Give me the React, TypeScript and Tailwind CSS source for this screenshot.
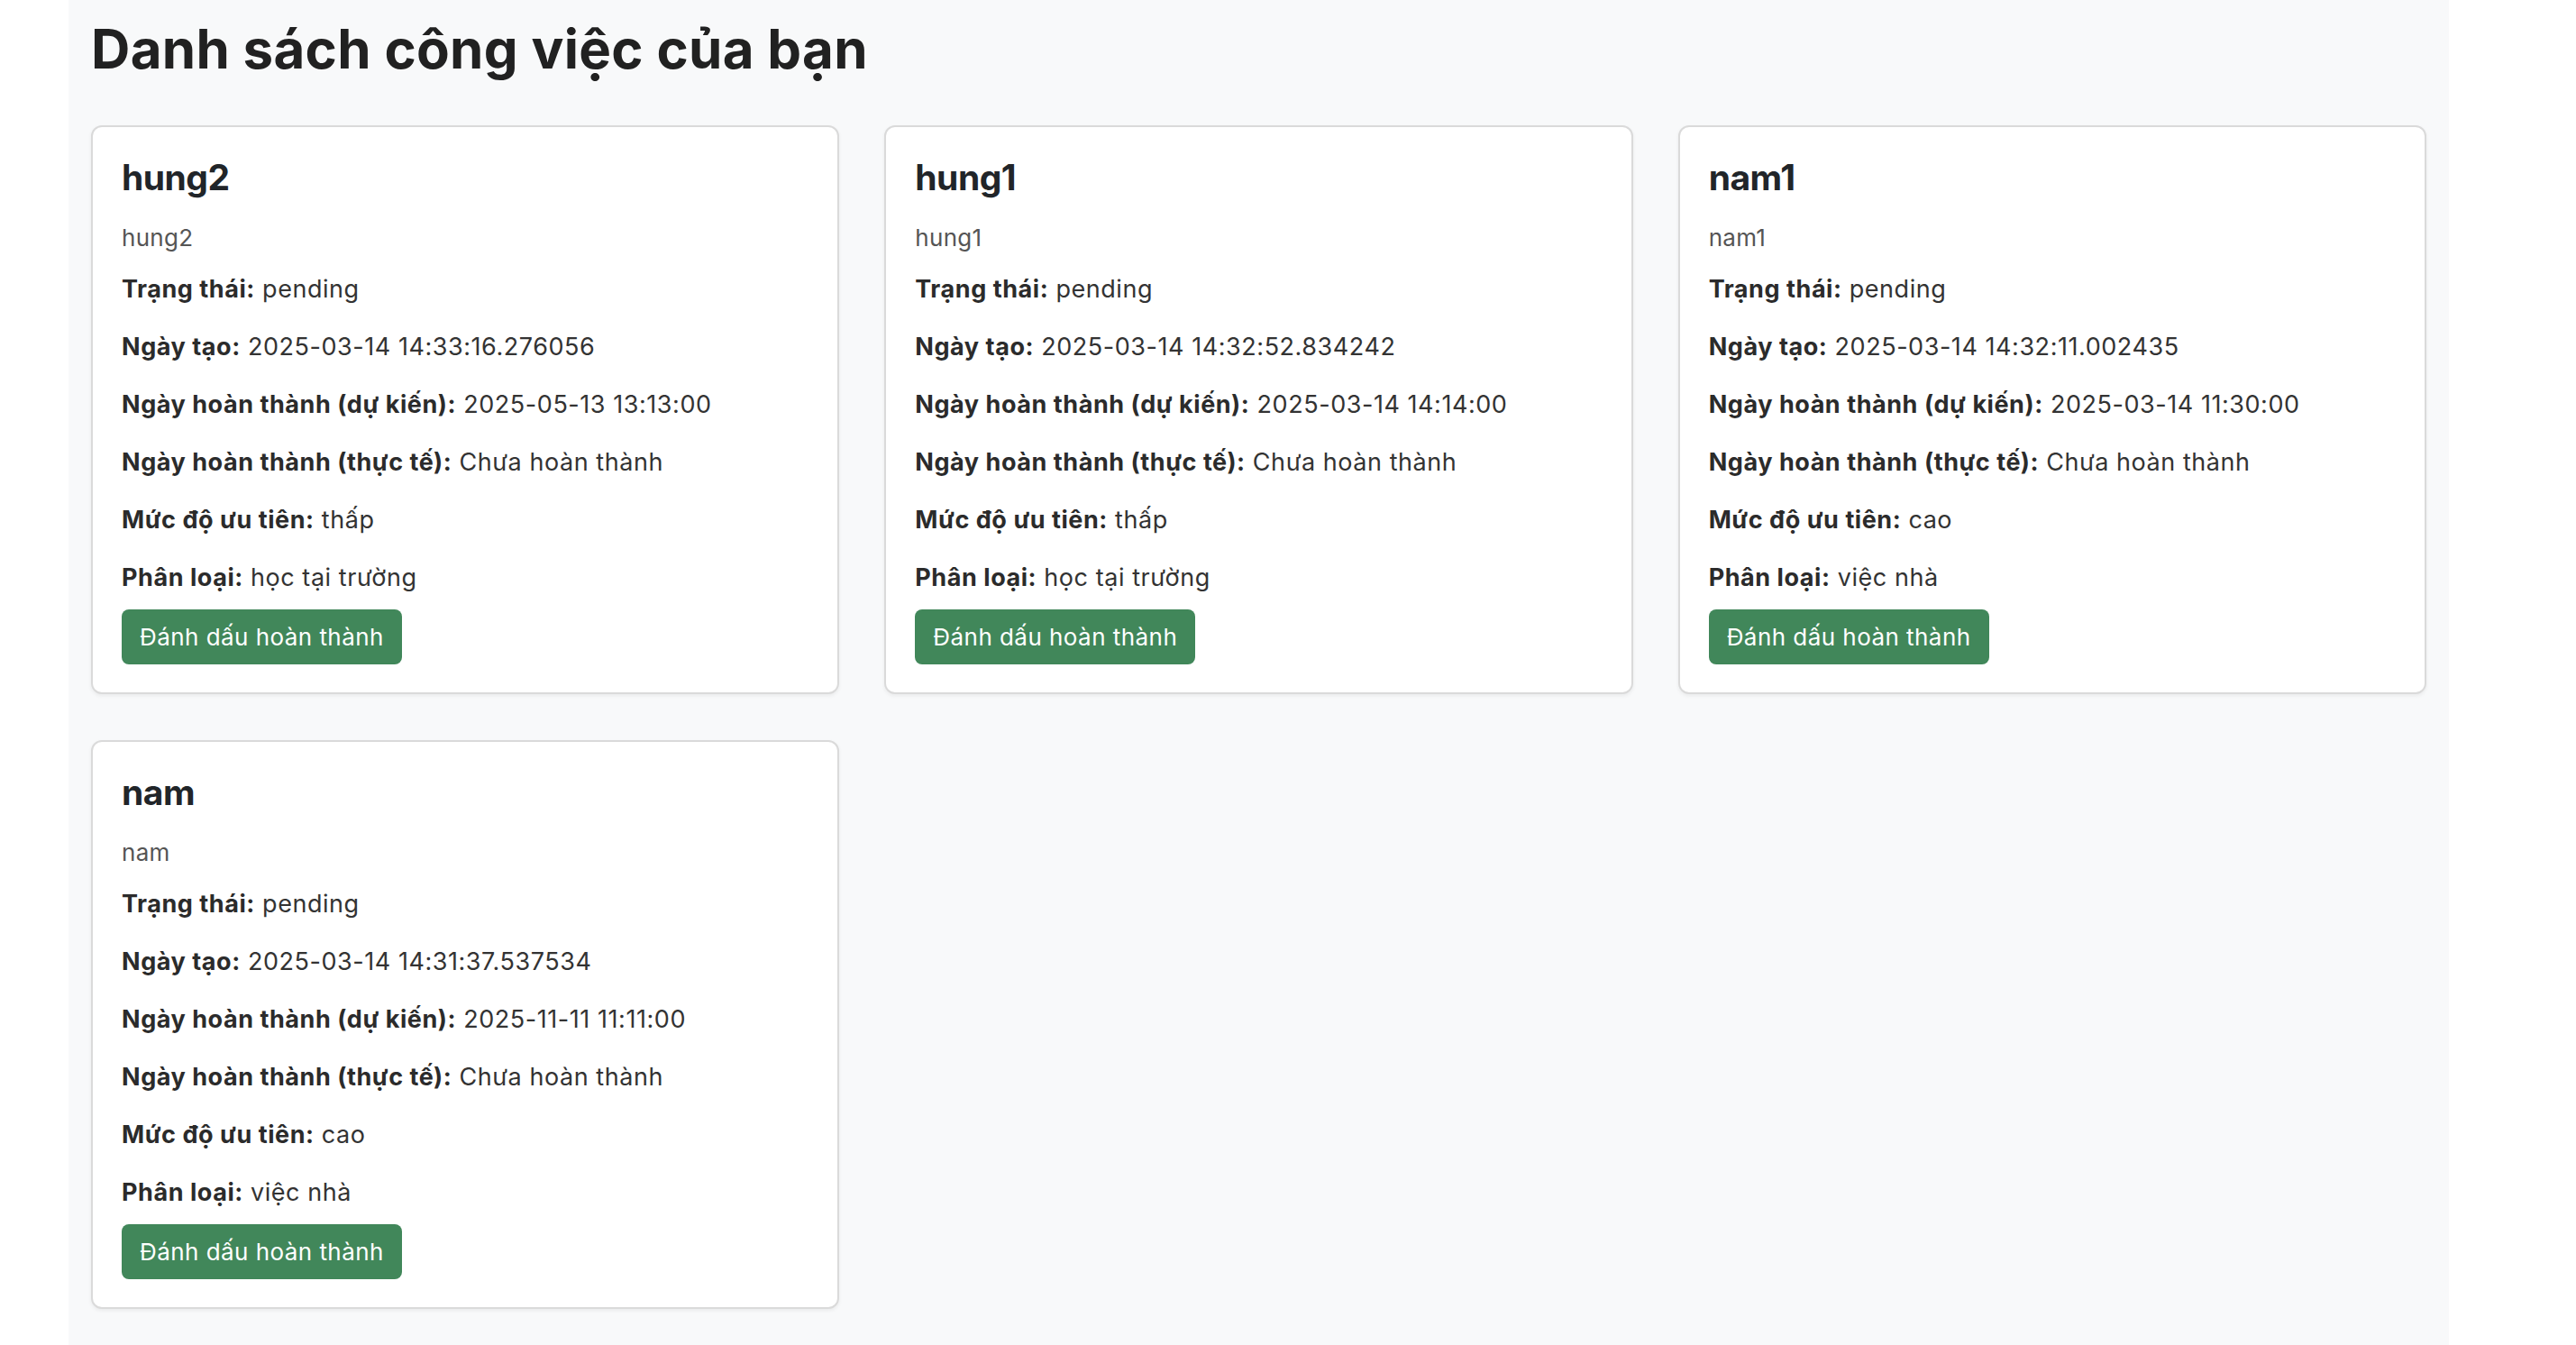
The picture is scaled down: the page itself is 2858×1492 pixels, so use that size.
import React from "react";

type Task = {
  title: string;
  desc: string;
  status: string;
  created: string;
  due: string;
  done: string;
  priority: string;
  category: string;
};

const tasks: Task[] = [
  {
    title: "hung2",
    desc: "hung2",
    status: "pending",
    created: "2025-03-14 14:33:16.276056",
    due: "2025-05-13 13:13:00",
    done: "Chưa hoàn thành",
    priority: "thấp",
    category: "học tại trường",
  },
  {
    title: "hung1",
    desc: "hung1",
    status: "pending",
    created: "2025-03-14 14:32:52.834242",
    due: "2025-03-14 14:14:00",
    done: "Chưa hoàn thành",
    priority: "thấp",
    category: "học tại trường",
  },
  {
    title: "nam1",
    desc: "nam1",
    status: "pending",
    created: "2025-03-14 14:32:11.002435",
    due: "2025-03-14 11:30:00",
    done: "Chưa hoàn thành",
    priority: "cao",
    category: "việc nhà",
  },
  {
    title: "nam",
    desc: "nam",
    status: "pending",
    created: "2025-03-14 14:31:37.537534",
    due: "2025-11-11 11:11:00",
    done: "Chưa hoàn thành",
    priority: "cao",
    category: "việc nhà",
  },
];

function Row({ label, value }: { label: string; value: string }) {
  return (
    <p className="mb-[25px] text-[27px] leading-[39px] tracking-[0.55px] text-[#333]">
      <strong className="font-bold text-[#2b2b2b]">{label}</strong> {value}
    </p>
  );
}

function Card({ t }: { t: Task }) {
  return (
    <div className="rounded-[12px] border-2 border-[#dadada] bg-white shadow-[0_2px_4px_rgba(0,0,0,0.06)]">
      <div className="px-[32px] pt-[33px] pb-[31px]">
        <h3 className="text-[39px] font-bold leading-[46px] tracking-[-0.5px] text-[#212529]">{t.title}</h3>
        <h6 className="mt-[24px] mb-[18px] text-[26px] leading-[39px] tracking-[0.3px] text-[#555]">{t.desc}</h6>
        <Row label="Trạng thái:" value={t.status} />
        <Row label="Ngày tạo:" value={t.created} />
        <Row label="Ngày hoàn thành (dự kiến):" value={t.due} />
        <Row label="Ngày hoàn thành (thực tế):" value={t.done} />
        <Row label="Mức độ ưu tiên:" value={t.priority} />
        <p className="mb-[16px] text-[27px] leading-[39px] tracking-[0.55px] text-[#333]">
          <strong className="font-bold text-[#2b2b2b]">Phân loại:</strong> {t.category}
        </p>
        <button className="rounded-[8px] bg-[#41875a] px-[20px] py-[11px] text-[26px] leading-[39px] tracking-[0.45px] text-white">
          Đánh dấu hoàn thành
        </button>
      </div>
    </div>
  );
}

export default function App() {
  return (
    <div
      className="min-h-screen bg-white"
      style={{ fontFamily: "Inter, 'Noto Sans', sans-serif" }}
    >
      <div className="ml-[76px] min-h-screen w-[2641px] bg-[#f8f9fa] px-[25px] pb-[40px]">
        <h1 className="pt-[18px] text-[60px] font-bold leading-[72px] tracking-[0.3px] text-[#212121]">
          Danh sách công việc của bạn
        </h1>
        <div className="mt-[49px] grid grid-cols-3 gap-x-[50px] gap-y-[51px]">
          {tasks.map((t) => (
            <Card key={t.title} t={t} />
          ))}
        </div>
      </div>
    </div>
  );
}
